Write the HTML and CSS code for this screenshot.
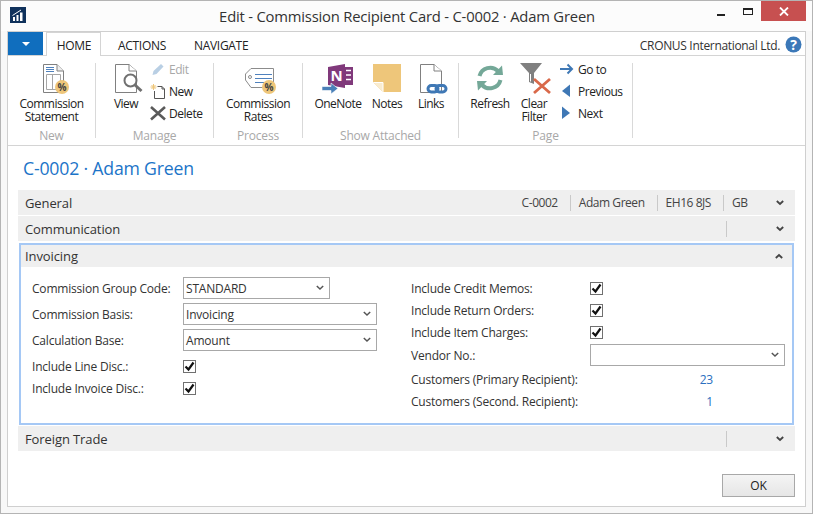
FILE: index.html
```html
<!DOCTYPE html>
<html lang="en">
<head>
<meta charset="utf-8">
<title>Edit - Commission Recipient Card - C-0002 · Adam Green</title>
<link rel="stylesheet" href="styles.css">
</head>
<body>
<div class="window">
  <header class="titlebar">
    <svg class="app-icon" width="16" height="16" viewBox="0 0 16 16"><rect width="16" height="16" fill="#10325c"/><path d="M3 10h2v4H3zM6.500 8h2v6h-2zM10 5.500h2.500V14H10z" fill="#fff"/><path d="M2.500 8.500L11 3" stroke="#fff" stroke-width="1" fill="none"/></svg>
    <div class="title">Edit - Commission Recipient Card - C-0002 · Adam Green</div>
    <div class="controls">
      <span class="ctl-min"></span>
      <span class="ctl-max"></span>
      <span class="ctl-close"><svg width="10" height="9" viewBox="0 0 10 9"><path d="M1 .5l8 8M9 .5l-8 8" stroke="#fff" stroke-width="1.800"/></svg></span>
    </div>
  </header>
  <div class="frame">
    <nav class="tabs">
      <button class="file-btn"><span class="file-arrow"></span></button>
      <span class="tab tab-active">HOME</span>
      <span class="tab tab-actions">ACTIONS</span>
      <span class="tab tab-navigate">NAVIGATE</span>
      <span class="company">CRONUS International Ltd.</span>
      <svg class="help" width="17" height="17" viewBox="0 0 17 17"><circle cx="8.500" cy="8.500" r="8" fill="#3b78b8"/><text x="8.500" y="13.500" text-anchor="middle" class="help-q">?</text></svg>
    </nav>
    <section class="ribbon">
      <div class="group g-new">
        <div class="group-body">
          <div class="big">
            <svg class="big-icon" viewBox="0 0 36 34"><path d="M9.500 1.500H23L29.500 8V29.500H9.500Z" fill="#fff" stroke="#808080"/><path d="M23 1.500V8H29.500" fill="#eee" stroke="#808080"/><path d="M12 4.500h8M12 6.500h8M12 8.500h8" stroke="#4f81bd"/><path d="M12.500 11.500H26.500V26.500H12.500ZM18.500 11.500V26.500" fill="none" stroke="#a6a6a6"/><circle cx="28" cy="24" r="7" fill="#eec67a"/><text x="28" y="28" text-anchor="middle" class="pct">%</text></svg>
            <span class="big-label">Commission<br>Statement</span>
          </div>
        </div>
        <div class="group-name">New</div>
      </div>
      <div class="group g-manage">
        <div class="group-body">
          <div class="big b-view">
            <svg class="big-icon" viewBox="0 0 36 34"><path d="M7.500 1.500H21L28.500 8V29.500H7.500Z" fill="#fff" stroke="#808080"/><path d="M21 1.500V8H28.500" fill="#fff" stroke="#808080"/><circle cx="22.500" cy="17.500" r="6" fill="#fff" stroke="#707070" stroke-width="2"/><path d="M27 22l6.500 6" stroke="#707070" stroke-width="3"/></svg>
            <span class="big-label">View</span>
          </div>
          <div class="smalls s-manage">
            <div class="small is-off"><svg class="small-icon" viewBox="0 0 16 16"><path d="M2.500 14l1-4L11 3l2.500 2.500-7 7.500z" fill="#b9cfe4"/></svg><span>Edit</span></div>
            <div class="small"><svg class="small-icon" viewBox="0 0 16 16"><path d="M7.500 3.500H12L14.500 6V15.500H4.500V8" fill="#fff" stroke="#555"/><path d="M12 3.500V6H14.500" fill="none" stroke="#555"/><path d="M3.500 1v6M.5 4h6M1.500 2l4 4M5.500 2l-4 4" stroke="#eec67a"/></svg><span>New</span></div>
            <div class="small"><svg class="small-icon" viewBox="0 0 16 16"><path d="M1 2l14 12.500M15 2L1 14.500" stroke="#5a5a5a" stroke-width="2.600"/></svg><span>Delete</span></div>
          </div>
        </div>
        <div class="group-name">Manage</div>
      </div>
      <div class="group g-process">
        <div class="group-body">
          <div class="big">
            <svg class="big-icon" viewBox="0 0 36 34"><path d="M11 5.500H33.500V21.500H24V24.500H11L5.500 17V11Z" fill="#fff" stroke="#8c8c8c" stroke-linejoin="round"/><circle cx="10" cy="14" r="1.500" fill="none" stroke="#8c8c8c"/><path d="M15 11.500h17M15 15.500h17M15 19.500h12" stroke="#4f81bd"/><circle cx="29" cy="24" r="7" fill="#eec67a"/><text x="29" y="28" text-anchor="middle" class="pct">%</text></svg>
            <span class="big-label">Commission<br>Rates</span>
          </div>
        </div>
        <div class="group-name">Process</div>
      </div>
      <div class="group g-attached">
        <div class="group-body">
          <div class="big b-onenote">
            <svg class="big-icon" viewBox="0 0 36 34"><path d="M24 4H33V22H24z" fill="#80397b"/><path d="M26 7.500h5M26 12h5M26 16.500h5" stroke="#fff" stroke-width="1.500"/><path d="M8 4L25 1V25L8 22Z" fill="#80397b"/><text x="16.500" y="17.500" text-anchor="middle" class="onenote-n">N</text><path d="M2 23.500H11V20L18 25.500L11 31V27.500H2Z" fill="#4a80b8" stroke="#fff" stroke-width=".6"/></svg>
            <span class="big-label">OneNote</span>
          </div>
          <div class="big b-notes">
            <svg class="big-icon" viewBox="0 0 36 34"><path d="M4 1H32V29H14L4 19Z" fill="#eec67a"/><path d="M4 19H14V29Z" fill="#f9ecd0"/><path d="M4.500 19.500H14V29" fill="none" stroke="#fff"/></svg>
            <span class="big-label">Notes</span>
          </div>
          <div class="big b-links">
            <svg class="big-icon" viewBox="0 0 36 34"><path d="M7.500 1.500H21L28.500 8V29.500H7.500Z" fill="#fff" stroke="#808080"/><path d="M21 1.500V8H28.500" fill="#fff" stroke="#808080"/><g fill="none" stroke="#3f78b5" stroke-width="3"><rect x="15" y="22.500" width="10" height="6.500" rx="3.200"/><rect x="23" y="22.500" width="10" height="6.500" rx="3.200"/></g></svg>
            <span class="big-label">Links</span>
          </div>
        </div>
        <div class="group-name">Show Attached</div>
      </div>
      <div class="group g-page">
        <div class="group-body">
          <div class="big b-refresh">
            <svg class="big-icon" viewBox="0 0 36 34"><g fill="none" stroke="#74a898" stroke-width="4"><path d="M7.500 13A11 11 0 0 1 26 8"/><path d="M28.500 17A11 11 0 0 1 10 22"/></g><path d="M21 12L31 12L30 2.500Z" fill="#74a898"/><path d="M15 18L5 18L6 27.500Z" fill="#74a898"/></svg>
            <span class="big-label">Refresh</span>
          </div>
          <div class="big b-clear">
            <svg class="big-icon" viewBox="0 0 36 34"><path d="M4 0H26L18 10V21L13 19V10Z" fill="#808080"/><path d="M14.500 11V18.500" stroke="#fff"/><path d="M18 16L34 30M34 16L18 30" stroke="#d9694a" stroke-width="2.800"/></svg>
            <span class="big-label">Clear<br>Filter</span>
          </div>
          <div class="smalls s-page">
            <div class="small"><svg class="small-icon" viewBox="0 0 16 16"><path d="M1 8H13M8.500 3.500L13 8L8.500 12.500" fill="none" stroke="#3f78b5" stroke-width="2"/></svg><span>Go to</span></div>
            <div class="small"><svg class="small-icon" viewBox="0 0 16 16"><path d="M11 1.500V14L3 8Z" fill="#3f78b5"/></svg><span>Previous</span></div>
            <div class="small"><svg class="small-icon" viewBox="0 0 16 16"><path d="M3 1.500V14L11 8Z" fill="#3f78b5"/></svg><span>Next</span></div>
          </div>
        </div>
        <div class="group-name">Page</div>
      </div>
    </section>
    <main class="content">
      <h1 class="page-title">C-0002 · Adam Green</h1>
      <div class="fasttab">
        <span class="ft-name">General</span>
        <span class="ft-sum">C-0002</span>
        <span class="ft-sum ft-sep">Adam Green</span>
        <span class="ft-sum ft-sep">EH16 8JS</span>
        <span class="ft-tail ft-sep ft-tail-gb">GB</span>
        <svg class="chev" width="8" height="6" viewBox="0 0 8 6"><path d="M.8 1l3.200 3 3.200-3" fill="none" stroke="#444" stroke-width="1.800"/></svg>
      </div>
      <div class="fasttab">
        <span class="ft-name">Communication</span>
        <span class="ft-tail ft-sep"></span>
        <svg class="chev" width="8" height="6" viewBox="0 0 8 6"><path d="M.8 1l3.200 3 3.200-3" fill="none" stroke="#444" stroke-width="1.800"/></svg>
      </div>
      <section class="panel">
        <div class="fasttab fasttab-open">
          <span class="ft-name ft-name-open">Invoicing</span>
          <svg class="chev chev-open" width="8" height="6" viewBox="0 0 8 6"><path d="M.8 5l3.200-3 3.200 3" fill="none" stroke="#444" stroke-width="1.800"/></svg>
        </div>
        <div class="panel-body">
          <div class="col col-left">
            <div class="row row-gap"><label class="lbl lbl-left">Commission Group Code:</label><div class="select sel-short"><span>STANDARD</span><svg class="sel-chev" width="8" height="6" viewBox="0 0 8 6"><path d="M.8 1l3.200 3 3.200-3" fill="none" stroke="#555" stroke-width="1.500"/></svg></div></div>
            <div class="row row-gap"><label class="lbl lbl-left">Commission Basis:</label><div class="select sel-long"><span>Invoicing</span><svg class="sel-chev" width="8" height="6" viewBox="0 0 8 6"><path d="M.8 1l3.200 3 3.200-3" fill="none" stroke="#555" stroke-width="1.500"/></svg></div></div>
            <div class="row row-gap"><label class="lbl lbl-left">Calculation Base:</label><div class="select sel-long"><span>Amount</span><svg class="sel-chev" width="8" height="6" viewBox="0 0 8 6"><path d="M.8 1l3.200 3 3.200-3" fill="none" stroke="#555" stroke-width="1.500"/></svg></div></div>
            <div class="row"><label class="lbl lbl-left">Include Line Disc.:</label><span class="check"><svg width="11" height="11" viewBox="0 0 11 11"><path d="M1.500 5.500l3 3 5-7" fill="none" stroke="#111" stroke-width="2.200"/></svg></span></div>
            <div class="row"><label class="lbl lbl-left">Include Invoice Disc.:</label><span class="check"><svg width="11" height="11" viewBox="0 0 11 11"><path d="M1.500 5.500l3 3 5-7" fill="none" stroke="#111" stroke-width="2.200"/></svg></span></div>
          </div>
          <div class="col col-right">
            <div class="row"><label class="lbl lbl-right">Include Credit Memos:</label><span class="check"><svg width="11" height="11" viewBox="0 0 11 11"><path d="M1.500 5.500l3 3 5-7" fill="none" stroke="#111" stroke-width="2.200"/></svg></span></div>
            <div class="row"><label class="lbl lbl-right">Include Return Orders:</label><span class="check"><svg width="11" height="11" viewBox="0 0 11 11"><path d="M1.500 5.500l3 3 5-7" fill="none" stroke="#111" stroke-width="2.200"/></svg></span></div>
            <div class="row"><label class="lbl lbl-right">Include Item Charges:</label><span class="check"><svg width="11" height="11" viewBox="0 0 11 11"><path d="M1.500 5.500l3 3 5-7" fill="none" stroke="#111" stroke-width="2.200"/></svg></span></div>
            <div class="row row-vendor"><label class="lbl lbl-right">Vendor No.:</label><div class="select sel-vendor"><span></span><svg class="sel-chev" width="8" height="6" viewBox="0 0 8 6"><path d="M.8 1l3.200 3 3.200-3" fill="none" stroke="#555" stroke-width="1.500"/></svg></div></div>
            <div class="row"><label class="lbl lbl-right">Customers (Primary Recipient):</label><span class="num">23</span></div>
            <div class="row"><label class="lbl lbl-right">Customers (Second. Recipient):</label><span class="num">1</span></div>
          </div>
        </div>
      </section>
      <div class="fasttab">
        <span class="ft-name">Foreign Trade</span>
        <span class="ft-tail ft-sep"></span>
        <svg class="chev" width="8" height="6" viewBox="0 0 8 6"><path d="M.8 1l3.200 3 3.200-3" fill="none" stroke="#444" stroke-width="1.800"/></svg>
      </div>
      <div class="footer"><button class="ok">OK</button></div>
    </main>
  </div>
</div>
</body>
</html>
```
FILE: styles.css
```css
* { box-sizing: border-box; }
html, body { margin: 0; padding: 0; }
body {
  width: 813px;
  height: 514px;
  overflow: hidden;
  font-family: "Open Sans", "Noto Sans", sans-serif;
  font-size: 12px;
  letter-spacing: -0.2px;
  color: #2b2b2b;
}
.window {
  width: 813px;
  height: 514px;
  border: 1px solid #b4b4b4;
  background: #f8f8f8;
  display: flex;
  flex-direction: column;
}
.titlebar {
  height: 30px;
  display: flex;
  align-items: flex-start;
  background: #fcfcfc;
}
.app-icon { margin: 6px 0 0 9px; flex: none; }
.title {
  flex: 1;
  text-align: center;
  font-size: 14.800px;
  line-height: 30px;
  letter-spacing: -0.2px;
  color: #333;
  padding-left: 71px;
}
.controls { display: flex; align-items: flex-start; flex: none; }
.ctl-min { width: 8px; height: 2px; background: #222; margin: 13px 18px 0 0; }
.ctl-max { width: 10px; height: 7px; border: 1px solid #222; border-top-width: 2px; margin: 7px 8px 0 0; }
.ctl-close { width: 45px; height: 20px; background: #c75050; margin-right: 6px; display: flex; align-items: center; justify-content: center; }
.frame {
  flex: 1;
  margin: 0 6px 6px;
  border: 1px solid #cfcfcf;
  background: #fff;
  display: flex;
  flex-direction: column;
}
.tabs {
  height: 24px;
  flex: none;
  display: flex;
  border-bottom: 1px solid #d4d4d4;
  align-items: stretch;
}
.file-btn { width: 35px; height: 23px; padding: 0; border: 0; background: #106ebe; display: flex; align-items: center; justify-content: center; }
.file-arrow { width: 0; height: 0; border-left: 4px solid transparent; border-right: 4px solid transparent; border-top: 4px solid #fff; }
.tab { font-size: 12px; line-height: 28px; color: #222; letter-spacing: -0.3px; }
.tab-active { width: 55px; height: 24px; margin-left: 3px; text-align: center; line-height: 26px; padding-left: 1px; background: #fff; border: 1px solid #d4d4d4; border-bottom: 0; }
.tab-actions { margin-left: 17px; }
.tab-navigate { margin-left: 28px; }
.company { margin-left: auto; line-height: 28px; font-size: 12px; letter-spacing: -0.32px; color: #333; }
.help { margin: 4px 3px 0 5px; flex: none; }
.help-q { font-size: 14px; font-weight: 700; fill: #fff; letter-spacing: 0; }
.pct { font-size: 10px; font-weight: 700; fill: #444; letter-spacing: 0; }
.onenote-n { font-size: 15px; font-weight: 700; fill: #fff; letter-spacing: 0; }
.ribbon {
  height: 90px;
  flex: none;
  display: flex;
  border-bottom: 1px solid #d4d4d4;
}
.group {
  height: 75px;
  margin-top: 7px;
  display: flex;
  flex-direction: column;
  border-right: 1px solid #d9d9d9;
}
.g-new { width: 88px; }
.g-manage { width: 118px; }
.g-process { width: 89px; }
.g-attached { width: 156px; }
.g-page { width: 174px; }
.group-body { height: 65px; flex: none; display: flex; }
.group-name { height: 10px; line-height: 15px; text-align: center; color: #a8a8a8; }
.big { display: flex; flex-direction: column; align-items: center; flex: none; }
.g-new .big, .g-process .big { width: 100%; }
.big-icon { width: 36px; height: 34px; display: block; flex: none; }
.big-label { text-align: center; line-height: 13px; color: #222; letter-spacing: -0.5px; white-space: nowrap; }
.b-view { width: 36px; margin-left: 12px; }
.b-onenote { width: 36px; margin-left: 17px; }
.b-notes { width: 36px; margin-left: 13px; }
.b-links { width: 36px; margin-left: 8px; }
.b-refresh { width: 36px; margin-left: 13px; }
.b-clear { width: 36px; margin-left: 8px; }
.smalls { display: flex; flex-direction: column; margin-top: -5px; }
.s-manage { margin-left: 6px; }
.s-page { margin-left: 7px; }
.small { height: 22px; display: flex; align-items: center; color: #222; letter-spacing: -0.45px; }
.small-icon { width: 16px; height: 16px; margin-right: 3px; flex: none; }
.is-off { color: #a8a8a8; }
.content { flex: 1; display: flex; flex-direction: column; padding: 0 10px; }
.page-title {
  margin: 0 0 0 5px;
  height: 44px;
  font-size: 17.700px;
  font-weight: 400;
  line-height: 44px;
  letter-spacing: -0.2px;
  color: #1c74c8;
}
.fasttab {
  height: 25px;
  flex: none;
  margin-bottom: 1px;
  background: #efefef;
  display: flex;
  align-items: center;
  justify-content: flex-end;
}
.ft-name { margin-right: auto; padding-left: 7px; font-size: 13px; line-height: 24px; color: #333; letter-spacing: -0.1px; }
.ft-name-open { padding-left: 4px; line-height: 21px; }
.ft-sum { padding: 0 12px 0 8px; height: 16px; line-height: 16px; color: #444; letter-spacing: -0.45px; }
.ft-sep { border-left: 1px solid #c9c9c9; }
.ft-tail { width: 45px; height: 16px; line-height: 16px; padding-left: 8px; color: #444; letter-spacing: -0.45px; }
.ft-tail-gb { width: 48px; }
.chev { margin-right: 11px; margin-left: 5px; flex: none; }
.chev-open { margin-left: 0; margin-right: 9px; }
.panel {
  margin: 1px 1px 1px;
  height: 182px;
  flex: none;
  border: 2px solid #a5c8f5;
  display: flex;
  flex-direction: column;
}
.fasttab-open { height: 22px; margin: 0; }
.panel-body { flex: 1; display: flex; padding: 10px 0 0 11px; }
.col { display: flex; flex-direction: column; }
.col-left { width: 379px; }
.row { height: 22px; display: flex; align-items: center; flex: none; }
.row-gap { margin-bottom: 4px; }
.row-vendor { margin-top: 1px; margin-bottom: 2px; }
.lbl { flex: none; color: #333; }
.lbl-left { width: 151px; }
.lbl-right { width: 179px; }
.select {
  height: 22px;
  border: 1px solid #a8a8a8;
  background: #fff;
  display: flex;
  align-items: center;
  justify-content: space-between;
  padding: 0 4px 0 2px;
  color: #333;
}
.sel-short { width: 147px; }
.sel-long { width: 194px; }
.sel-vendor { width: 195px; }
.sel-chev { flex: none; margin-right: 1px; }
.check { width: 13px; height: 13px; border: 1px solid #707070; background: #fff; display: flex; align-items: center; justify-content: center; }
.num { width: 123px; text-align: right; color: #2a6fc0; }
.footer { flex: 1; display: flex; justify-content: flex-end; padding-top: 22px; align-items: flex-start; }
.ok {
  width: 73px;
  height: 23px;
  border: 1px solid #a8a8a8;
  background: linear-gradient(#f4f4f4, #e6e6e6);
  font-family: inherit;
  font-size: 12px;
  color: #222;
  padding: 0;
}
```
